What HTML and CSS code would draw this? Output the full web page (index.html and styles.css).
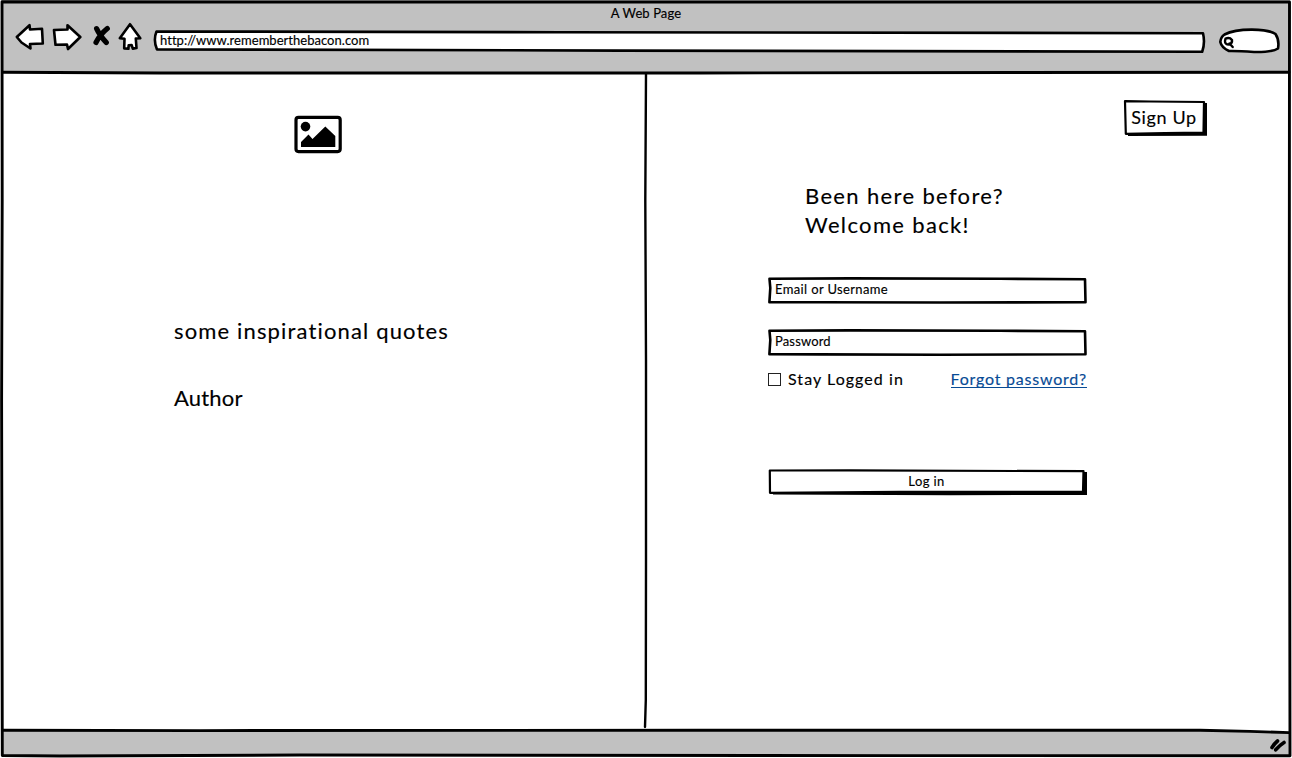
FILE: index.html
```html
<!DOCTYPE html>
<html lang="en">
<head>
<meta charset="utf-8">
<title>A Web Page</title>
<link rel="stylesheet" href="styles.css">
</head>
<body>
<div class="browser">
  <header class="chrome">
    <div class="title"><span class="t-title">A Web Page</span></div>
    <div class="toolbar">
      <svg class="ico back" viewBox="15 22 30 32"><path d="M16.8 37 29.5 25.2 30 29.5 42 28.8 42.8 43.5 30 44 30.5 48.5 21.5 42.5Z"/></svg>
      <svg class="ico forward" viewBox="52 22 30 32"><path d="M54 30 67.5 29.5 67.5 25.2 80.3 37 68 49 67 44.5 55.5 44.8Z"/></svg>
      <svg class="ico stop" viewBox="92 22 20 32"><path d="M96.6 28.6Q99.5 35 106.3 42.6M107.3 28.6Q100 34.5 96 42.5"/></svg>
      <svg class="ico home" viewBox="118 22 26 32"><path d="M130 24.2 140.3 38.3 135.8 38.5 136.5 48 132.8 48.6 131.6 45 128.7 45.2 128.4 48.8 124.2 48.4 124.5 38.8 119.8 38.2Z"/></svg>
      <div class="url">
        <svg class="sketch" viewBox="153 22 1053 32" preserveAspectRatio="none"><path d="M156.5 31.5 560 32.2 1203 33.2Q1205.3 43 1202.2 51.7L620 50.6 157 49.4Q153 40 156.5 31.5Z"/></svg>
        <span class="t-url">http://www.rememberthebacon.com</span>
      </div>
      <svg class="ico search" viewBox="1218 22 62 32"><path d="M1224.5 34.5Q1234 29.5 1252 29.6 1270 30 1275.5 34 1279.5 40 1278 48.5 1272 52.3 1254 52 1238 50.8 1229 51 1221.5 47.5 1220.3 42 1220.8 37 1224.5 34.5Z"/><path class="lens" d="M1225.5 38.7Q1229.5 37 1232 40 1232.5 43.5 1229 44.5 1224.8 44.5 1225 41ZM1229.5 43.5 1232.7 47"/></svg>
    </div>
  </header>
  <main class="content">
    <section class="intro">
      <svg class="picture" viewBox="294 115 49 39"><rect x="296" y="117.4" width="44.2" height="34.2" rx="2.5"/><circle cx="305.5" cy="126.6" r="4.8"/><path d="M301 147V142L308.5 134.5 312.5 139 325.3 126.5 335.3 136V147Z"/></svg>
      <p class="quote t-quote">some inspirational quotes</p>
      <p class="author t-author">Author</p>
    </section>
    <section class="login">
      <button class="signup">
        <svg class="sketch" viewBox="1123 99 85 38"><path class="shadow" d="M1204 103H1207V135.8L1128 136V132.5Z"/><path class="box" d="M1125 101.2 1150 101.5 1204 102 1203.5 132.6 1165 133 1125.8 133.8Z"/></svg>
        <span class="t-signup">Sign Up</span>
      </button>
      <h1 class="welcome"><span class="t-been">Been here before?</span><span class="t-back">Welcome back!</span></h1>
      <div class="field">
        <svg class="sketch" viewBox="768 277 319 27"><path d="M769.5 278.8 850 278.4 1000 278.8 1085 279.2 1085.5 302.2 940 302.5 820 302.2 769.4 302.2 770.3 288Z"/></svg>
        <span class="t-email">Email or Username</span>
      </div>
      <div class="field password">
        <svg class="sketch" viewBox="768 277 319 27"><path d="M769.5 278.8 850 278.4 1000 278.8 1085 279.2 1085.5 302.2 940 302.7 820 302.4 769.4 302.2 770.3 288Z"/></svg>
        <span class="t-password">Password</span>
      </div>
      <div class="options">
        <label class="stay"><span class="check"></span><span class="t-stay">Stay Logged in</span></label>
        <a class="forgot" href="#"><span class="t-forgot">Forgot password?</span></a>
      </div>
      <button class="submit">
        <svg class="sketch" viewBox="768 468 320 28"><path class="shadow" d="M1083 472H1087V495L950 495.2 773 494.6V491Z"/><path class="box" d="M769.8 470.5 850 470.4 1083.5 471.2 1083 491.7 900 491.8 770 492.8Z"/></svg>
        <span class="t-login">Log in</span>
      </button>
    </section>
    <svg class="divider" viewBox="642 73 7 657"><path d="M646 73 645.3 200 646 360 646 560 645.8 700 645 727"/></svg>
  </main>
  <footer class="status">
    <svg class="grip" viewBox="1268 736 20 18"><path d="M1272 747.5Q1274.5 743.5 1277.5 741M1275.7 749.8Q1280 745 1284 742.5"/></svg>
  </footer>
  <svg class="frame" viewBox="0 0 1292 758">
    <path d="M2 1.8 300 2 1289.5 2 1289.3 300 1289.7 550 1290 755.8 900 755.6 300 755 60 756 2.3 755.5 1.6 400 2.2 200Z"/>
    <path d="M3 72.2 160 73 700 73 1289 72.2"/>
    <path d="M3 730.2 200 730.6 700 730.3 1200 730.3 1250 731.4 1289 732.6"/>
  </svg>
</div>
</body>
</html>
```
FILE: styles.css
```css
* { box-sizing: border-box; }
body { margin: 0; background: #fff; color: #000; font-family: Lato, "Open Sans", sans-serif; font-size: 13px; -webkit-text-stroke: 0.15px currentColor; }
p, h1 { margin: 0; font-weight: 400; }
svg { display: block; fill: none; stroke: #000; stroke-width: 2.6; stroke-linejoin: round; stroke-linecap: round; }
button { padding: 0; border: 0; background: none; color: inherit; font: inherit; }
span { white-space: nowrap; }

.browser { position: relative; display: flex; flex-direction: column; width: 1292px; height: 758px; overflow: hidden; }
.frame { position: absolute; inset: 0; width: 1292px; height: 758px; pointer-events: none; stroke-width: 2.9; }

.chrome { height: 73px; margin: 0 2px; background: #c1c1c1; }
.title { height: 22px; padding-top: 4px; line-height: 18px; text-align: center; }
.toolbar { display: flex; height: 32px; padding-left: 13px; }
.ico { height: 32px; flex: none; fill: #fff; }
.back { width: 30px; margin-right: 7px; }
.forward { width: 30px; margin-right: 10px; }
.stop { width: 20px; margin-right: 6px; stroke-width: 5.2; fill: none; }
.home { width: 26px; margin-right: 9px; }
.search { width: 62px; margin-left: 12px; }
.search .lens { stroke-width: 2.4; }
.url { position: relative; width: 1053px; padding-left: 7px; line-height: 37px; }
.sketch { position: absolute; inset: 0; width: 100%; height: 100%; z-index: -1; fill: #fff; }
.url, .field, .signup, .submit { isolation: isolate; }

.content { position: relative; display: grid; grid-template-columns: 646px 646px; height: 657px; }
.divider { position: absolute; left: 642px; top: 0; width: 7px; height: 657px; stroke-width: 2.4; }

.intro { padding: 42px 0 0 174px; font-size: 22px; line-height: 28px; }
.picture { width: 49px; height: 39px; margin-left: 120px; stroke-width: 3.2; }
.picture circle, .picture path { fill: #000; stroke: none; }
.quote { margin-top: 163px; }
.author { margin-top: 39px; }

.login { display: flex; flex-direction: column; padding: 26px 0 0 122px; }
.signup { position: relative; width: 85px; height: 38px; margin-left: 355px; padding: 0 3px 2px 0; font-size: 18px; line-height: 36px; }
.shadow { fill: #000; stroke: none; }
.box { stroke-width: 2.2; }
.welcome { display: flex; flex-direction: column; margin: 44px 0 0 37px; font-size: 22px; line-height: 29px; }
.field { position: relative; width: 319px; height: 27px; margin-top: 38px; padding-left: 7px; line-height: 25px; }
.field.password { margin-top: 25px; }
.options { display: flex; justify-content: space-between; width: 319px; margin-top: 11px; font-size: 16px; line-height: 24px; }
.stay { display: flex; align-items: center; gap: 7px; }
.check { width: 13px; height: 13px; border: 1px solid #222; }
.forgot { color: #084b95; text-decoration: none; height: 21px; border-bottom: 1px solid #084b95; }
.submit { position: relative; width: 320px; height: 28px; margin-top: 77px; padding: 0 3px 2px 0; line-height: 26px; }

.status { display: flex; justify-content: flex-end; height: 25px; margin: 0 2px; padding: 6px 2px 0 0; background: #c1c1c1; clip-path: polygon(0 0, 94% 0, 100% 3px, 100% 100%, 0 100%); }
.grip { width: 20px; height: 18px; stroke-width: 3.6; }

.t-title { letter-spacing: 0.1px; }
.t-url { letter-spacing: 0.03px; }
.t-email { letter-spacing: 0.36px; }
.t-password { letter-spacing: 0.15px; }
.t-login { letter-spacing: 0.4px; }
.t-quote { letter-spacing: 1.15px; }
.t-author { letter-spacing: 0.2px; }
.t-been { letter-spacing: 1.35px; }
.t-back { letter-spacing: 1.35px; }
.t-signup { letter-spacing: 0.65px; }
.t-stay { letter-spacing: 1.05px; }
.t-forgot { letter-spacing: 0.78px; }
```
